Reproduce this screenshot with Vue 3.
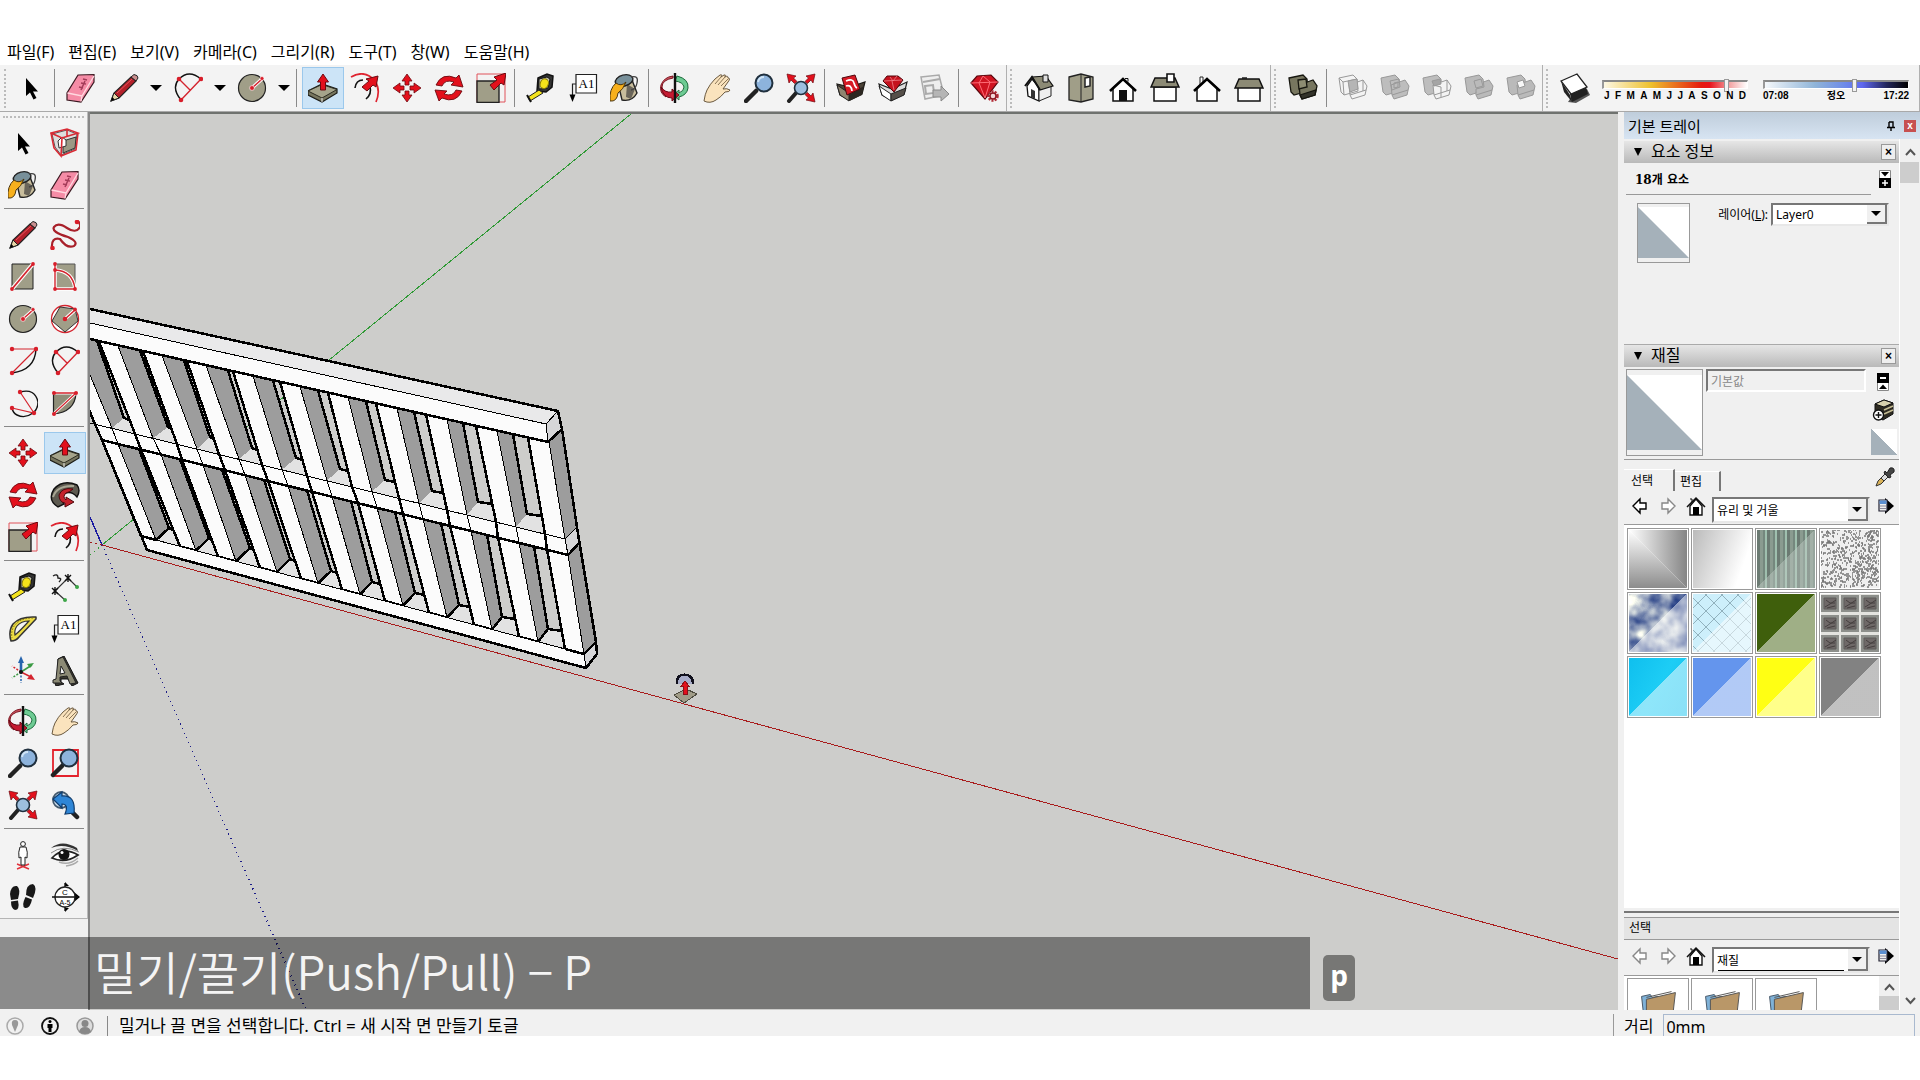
<template>
  <div class="app">
    <svg class="defs" aria-hidden="true">
      <symbol id="i-select" viewBox="0 0 30 30"><path d="M10 5V23L14 19.500L17.500 26.500L20.500 25L17 18.500H22Z" fill="#000" /></symbol>
      <symbol id="i-eraser" viewBox="0 0 30 30">
        <path d="M12 2L28 1.500V9L15 29L1 27V20Z" fill="#f58ca6" stroke="#3a1820" stroke-width="1.200" />
        <path d="M1.500 20L16 23L28 3M16 23L15 28.500" fill="none" stroke="#ffd9e0" stroke-width="1.300" />
        <path d="M15 17L19 8M13 14l4 1M15 10l5 1M17 6l4 1" stroke="#a33b58" stroke-width="1.500" fill="none" />
      </symbol>
      <symbol id="i-pencil" viewBox="0 0 30 30">
        <path d="M2 28L5 20L22 4L27 8L10 25Z" fill="#b4202a" stroke="#222" stroke-width="1.200" />
        <path d="M22 4L25 1.500Q29 2 29 5L27 8Z" fill="#c98f8f" stroke="#222" />
        <path d="M2 28L5 20L10 25Z" fill="#e8d6a8" stroke="#222" /><path d="M2 28l1.500-4 2 2.500z" fill="#000" />
        <path d="M8 20L23 6" stroke="#e5555c" />
      </symbol>
      <symbol id="i-arc" viewBox="0 0 30 30">
        <path d="M8 27Q-2 15 6 6Q16-4 28 6" fill="none" stroke="#111" stroke-width="1.400" />
        <path d="M8 27L28 6M6 6L17 17" stroke="#d4242e" stroke-width="1.400" />
        <g fill="#d81e2a"><circle cx="8" cy="27" r="2.300" /><circle cx="28" cy="6" r="2.300" /><circle cx="6" cy="6" r="2.300" /></g>
      </symbol>
      <symbol id="i-circle" viewBox="0 0 30 30">
        <circle cx="15" cy="15" r="13.500" fill="#a09e88" stroke="#222" stroke-width="1.200" />
        <path d="M15 15L25 6" stroke="#fff" stroke-width="3.500" /><path d="M15 15L25 6" stroke="#d4242e" stroke-width="1.500" />
        <g fill="#d81e2a" stroke="#fff" stroke-width=".6"><circle cx="15" cy="15" r="2.400" /><circle cx="25" cy="5.500" r="2" /></g>
      </symbol>
      <symbol id="i-push" viewBox="0 0 30 30">
        <path d="M0 18L14 11L29 16V20L14 29L0 22Z" fill="#77765f" stroke="#1c1c16" stroke-width="1.200" />
        <path d="M0 18L14 11.500L29 16.500L14 25Z" fill="#a5a48b" stroke="#2c2c22" />
        <path d="M14 25V29" stroke="#eee" />
        <path d="M15 1L20.500 9H17.500V17H12.500V9H9.500Z" fill="#e3101c" stroke="#6c0a10" />
      </symbol>
      <symbol id="i-offset" viewBox="0 0 30 30">
        <path d="M1 4Q15-4 25 8Q31 17 26 29" fill="none" stroke="#df2430" stroke-width="1.700" />
        <path d="M5 15Q6 7 13 7M20 14Q22 21 16 26" fill="none" stroke="#111" stroke-width="1.600" />
        <path d="M12 14L19 8L16 6L28 3L26 14L23 12L17 18Z" fill="#e3101c" stroke="#6c0a10" />
      </symbol>
      <symbol id="i-move" viewBox="0 0 30 30">
        <g fill="#e3101c" stroke="#6c0a10" stroke-width=".8">
          <path d="M15 1L20 8H17V12H13V8H10Z" /><path d="M15 29L20 22H17V18H13V22H10Z" />
          <path d="M1 15L8 10V13H12V17H8V20Z" /><path d="M29 15L22 10V13H18V17H22V20Z" />
        </g>
      </symbol>
      <symbol id="i-rotate" viewBox="0 0 30 30">
        <g fill="#e3101c" stroke="#6c0a10" stroke-width=".9">
          <path d="M2 12Q8-1 22 5L25 2L29 14L17 12L20 9Q11 6 8 13Z" />
          <path d="M28 18Q22 31 8 25L5 28L1 17L13 18L10 21Q19 24 22 17Z" />
        </g>
      </symbol>
      <symbol id="i-scale" viewBox="0 0 30 30">
        <path d="M1 29V1H29V29Z" fill="none" stroke="#e0525a" /><path d="M1 8H23V29.500H1Z" fill="#a09e88" stroke="#222" stroke-width="1.400" />
        <path d="M14 12L21 7L18 4L30 0L28 12L25 10L18 17Z" fill="#e3101c" stroke="#6c0a10" />
      </symbol>
      <symbol id="i-tape" viewBox="0 0 30 30">
        <path d="M12 5L21 1L27 3L26 14L20 19L11 18Z" fill="#333" stroke="#111" stroke-width="1.500" />
        <path d="M13 6L21 4L24 6L22 15L13 16Z" fill="#c8c6b4" stroke="#111" />
        <ellipse cx="18.500" cy="10.500" rx="4" ry="5" fill="#f5e21a" stroke="#8a7d00" transform="rotate(20 18 10)" />
        <path d="M13 17L2 24L4 28L17 20Z" fill="#f3e31d" stroke="#222" /><path d="M1 22l4 7" stroke="#111" stroke-width="2" />
      </symbol>
      <symbol id="i-text" viewBox="0 0 30 30">
        <path d="M8 1.500H28.500V20H8Z" fill="#fff" stroke="#222" stroke-width="1.200" />
        <text x="18.500" y="15" text-anchor="middle" font-family="Liberation Serif, serif" font-size="13">A1</text>
        <path d="M8 11H4.500V23" fill="none" stroke="#222" stroke-width="1.200" /><path d="M1.500 21.500H7.500L4.500 29Z" fill="#000" />
      </symbol>
      <symbol id="i-paint" viewBox="0 0 30 30">
        <path d="M7 6L22 7L27 20Q22 29 12 27Z" fill="#c8bd9c" stroke="#222" stroke-width="1.400" />
        <path d="M17 11l8 5-4 10-5-2z" fill="#6a655a" />
        <ellipse cx="14" cy="7.500" rx="9" ry="5.500" fill="#78909a" stroke="#222" stroke-width="1.400" transform="rotate(-15 14 7)" />
        <path d="M21 4Q29 2 27 10Q26 16 21 17" fill="none" stroke="#444" stroke-width="1.300" />
        <path d="M6 10Q-1 16 0 28Q7 29 8 20Q13 17 16 9Q11 14 6 10Z" fill="#f7b01c" stroke="#4a3510" />
      </symbol>
      <symbol id="i-orbit" viewBox="0 0 30 30">
        <path d="M13 5Q2 7 2 14Q2 19 6 20V24Q-1 20 1 12Q4 4 13 3Z" fill="#cf5560" stroke="#7b1520" />
        <path d="M17 3Q29 6 28 15Q27 22 19 24V27L13 22L19 17V20Q24 18 24 14Q23 9 15 8Z" fill="#6dcb93" stroke="#1c6b3c" />
        <path d="M1 14Q5 20 12 19V16L19 22L12 28V25Q3 25 1 14Z" fill="#c51a31" stroke="#6d0714" />
        <path d="M15 0V30" stroke="#111" stroke-width="2.400" />
      </symbol>
      <symbol id="i-pan" viewBox="0 0 30 30">
        <path d="M2 28Q3 21 5 17Q8 11 13 6L18 2Q21 1 19 4L22 2Q24 1 23 4Q26 2 26 5Q29 5 26 9L21 16Q25 15 28 17Q28 19 23 19Q19 24 14 27Q8 31 2 28Z" fill="#fae3bd" stroke="#6b5a41" />
        <path d="M13 11L19 4M16 12L23 4M19 13L26 6" stroke="#8a7557" fill="none" />
      </symbol>
      <symbol id="i-zoom" viewBox="0 0 30 30">
        <path d="M2 28L12 18" stroke="#222" stroke-width="4.500" stroke-linecap="round" />
        <circle cx="20" cy="10" r="8.500" fill="#8db3dc" stroke="#20303e" stroke-width="2" /><path d="M14 9Q15 4 20 4" stroke="#cfe4f6" stroke-width="2" fill="none" />
      </symbol>
      <symbol id="i-extents" viewBox="0 0 30 30">
        <path d="M3 28L10 20" stroke="#222" stroke-width="4" stroke-linecap="round" />
        <circle cx="15" cy="15" r="6.500" fill="#9dbfdf" stroke="#20303e" stroke-width="1.600" />
        <g fill="#e3101c" stroke="#6c0a10" stroke-width=".7">
          <path d="M1 1L10 3L7.500 5L11 8.500L8.500 10.500L5 7L3 10Z" /><path d="M29 1L20 3L22.500 5L19 8.500L21.500 10.500L25 7L27 10Z" />
          <path d="M29 29L20 27L22.500 25L19 21.500L21.500 19.500L25 23L27 20Z" />
        </g>
      </symbol>
      <symbol id="i-warehouse" viewBox="0 0 30 30">
        <path d="M1 11L14 14L29 9L26 21L14 27L4 22Z" fill="#4b4338" stroke="#1a1713" stroke-width="1.200" />
        <path d="M1 12L13 20V28L4 22Z" fill="#8f8470" stroke="#222" /><path d="M13 22L28 13L26 22L13 28Z" fill="#2c2721" />
        <path d="M6 5L19 2L24 16L11 22Z" fill="#d71925" stroke="#4d070c" />
        <path d="M10 8Q17 5 18 10Q19 14 21 15M10 13Q15 11 16 18" fill="none" stroke="#fff" stroke-width="1.700" />
      </symbol>
      <symbol id="i-extwarehouse" viewBox="0 0 30 30">
        <path d="M1 11L14 16L29 9L26 21L14 27L4 22Z" fill="#ddd" stroke="#222" stroke-width="1.200" />
        <path d="M1 13L13 21V28L4 22Z" fill="#fff" stroke="#222" /><path d="M13 21L28 15L26 22L13 28Z" fill="#554f49" stroke="#222" />
        <path d="M5 8L9 3H20L25 7L16 19Z" fill="#c5121e" stroke="#54060b" /><path d="M6 8L24 7M12 4l3 4 4-5M14 8l2 9" stroke="#f0808a" stroke-width=".8" fill="none" />
      </symbol>
      <symbol id="i-layout" viewBox="0 0 30 30">
        <path d="M1 4L19 2L24 22L5 26Z" fill="#eee" stroke="#aaa" stroke-width="1.500" /><path d="M3 9L20 6M5 13L13 12L14 20L6 21Z" fill="none" stroke="#aaa" stroke-width="2" />
        <path d="M13 17H21V13L29 21L21 28V24H13Z" fill="#b5b5b5" stroke="#888" />
      </symbol>
      <symbol id="i-extmanager" viewBox="0 0 30 30">
        <path d="M1 10L7 3L21 2L28 9L15 26Z" fill="#cf1421" stroke="#5b070d" stroke-width="1.200" />
        <path d="M1 10L28 9M9 10L13 3L20 9M9 10L15 25L20 9" fill="none" stroke="#ff6d77" />
        <circle cx="23" cy="23" r="4.500" fill="#f3d8d8" stroke="#b02a35" stroke-width="2.500" stroke-dasharray="2 1.200" /><circle cx="23" cy="23" r="3" fill="none" stroke="#8d1620" stroke-width="1.400" />
      </symbol>
      <symbol id="i-iso" viewBox="0 0 30 30">
        <path d="M3 13L8 6L15 14V28L4 23Z" fill="#fff" stroke="#111" stroke-width="1.300" /><path d="M15 15L27 12V23L15 28Z" fill="#eee" stroke="#222" />
        <path d="M8 4L22 3L29 13L16 17Z" fill="#8c8a75" stroke="#111" stroke-width="1.200" /><path d="M1 13L8 4L16 17" fill="none" stroke="#111" stroke-width="2" />
        <path d="M19 2H24V9H19Z" fill="#ddd" stroke="#111" /><path d="M7 16L11 18V26L7 24Z" fill="#333" />
      </symbol>
      <symbol id="i-top" viewBox="0 0 30 30">
        <path d="M3 4L15 1L27 4V26L15 29L3 27Z" fill="#a09e88" stroke="#222" stroke-width="1.300" /><path d="M15 1V29" stroke="#222" /><path d="M19 5L24 4V13L19 14Z" fill="#fff" stroke="#222" stroke-width="1.500" />
      </symbol>
      <symbol id="i-front" viewBox="0 0 30 30">
        <path d="M5 15V28H25V15L15 6Z" fill="#fff" stroke="#111" stroke-width="1.500" /><path d="M2 18L15 6L28 18" fill="none" stroke="#000" stroke-width="2.600" /><path d="M11 17H19V28H11Z" fill="#111" /><path d="M17 5.500h3v3" fill="none" stroke="#111" />
      </symbol>
      <symbol id="i-right" viewBox="0 0 30 30">
        <path d="M4 14H26V28H4Z" fill="#fff" stroke="#111" stroke-width="1.500" /><path d="M5 5H25L29 14H1Z" fill="#8c8a75" stroke="#111" stroke-width="1.500" /><path d="M17 1H24V9H17Z" fill="#fff" stroke="#111" stroke-width="1.600" />
      </symbol>
      <symbol id="i-back" viewBox="0 0 30 30">
        <path d="M8 4h3v8H8z" fill="#fff" stroke="#222" /><path d="M5 15V28H25V15L15 6Z" fill="#fff" stroke="#111" stroke-width="1.500" /><path d="M2 18L15 6L28 18" fill="none" stroke="#000" stroke-width="2.600" />
      </symbol>
      <symbol id="i-left" viewBox="0 0 30 30">
        <path d="M8 4h5v3H8z" fill="#555" /><path d="M4 14H26V28H4Z" fill="#fff" stroke="#111" stroke-width="1.500" /><path d="M5 6H25L29 15H1Z" fill="#8c8a75" stroke="#111" stroke-width="1.500" />
      </symbol>
      <symbol id="i-shell" viewBox="0 0 30 30">
        <g fill="#77765f" stroke="#16160f" stroke-width="1.300"><path d="M1 5L15 2L19 6L20 18L6 22L3 19Z" /><path d="M11 12L25 7L29 13L27 22L14 26L12 22Z" /><path d="M12 22L28 17L27 22L14 26Z" fill="#33332a" /><path d="M10 7L18 6L19 14L11 16Z" fill="#8d8c72" /></g>
      </symbol>
      <symbol id="i-intersect" viewBox="0 0 30 30">
        <g fill="none" stroke="#999"><path d="M1 5L15 2L19 6L20 18L6 22L3 19ZM1 5L5 9L19 6M5 9L6 22" /><path d="M11 12L25 7L29 13L27 22L14 26L12 22ZM12 22L28 17M25 7V18" /><path d="M10 8L19 6L20 16L12 19Z" fill="#b5b5b5" /></g>
      </symbol>
      <symbol id="i-union" viewBox="0 0 30 30">
        <g fill="#bdbdbd" stroke="#999"><path d="M1 5L15 2L19 6L20 18L6 22L3 19Z" /><path d="M11 12L25 7L29 13L27 22L14 26L12 22Z" /><path d="M12 22L28 17M10 8L19 6L20 14L12 17ZM14 10L18 9V14L14 15Z" fill="none" /></g>
      </symbol>
      <symbol id="i-subtract" viewBox="0 0 30 30">
        <g stroke="#999"><path d="M1 5L15 2L19 6L20 18L6 22L3 19Z" fill="#bdbdbd" /><path d="M11 12L25 7L29 13L27 22L14 26L12 22Z" fill="#f3f3f3" /><path d="M12 22L28 17M25 7V18M11 12L19 14V24" fill="none" /><path d="M10 8L18 6L19 11L12 13Z" fill="#a5a5a5" /></g>
      </symbol>
      <symbol id="i-trim" viewBox="0 0 30 30">
        <g fill="#bababa" stroke="#999"><path d="M11 12L25 7L29 13L27 22L14 26L12 22Z" /><path d="M12 22L28 17" /><path d="M1 5L15 2L19 6L20 14L12 16V20L6 22L3 19Z" /><path d="M10 8L17 6L19 13L12 15Z" /></g>
      </symbol>
      <symbol id="i-splitsolid" viewBox="0 0 30 30">
        <g fill="#bababa" stroke="#999"><path d="M1 5L15 2L19 6L20 18L6 22L3 19Z" /><path d="M11 12L25 7L29 13L27 22L14 26L12 22Z" /><path d="M12 22L28 17" /><path d="M11 9L17 7L19 13L13 15Z" fill="#f8f8f8" /></g>
      </symbol>
      <symbol id="i-shadow" viewBox="0 0 30 30">
        <path d="M12 23L27 16L30 22L16 30L8 29Z" fill="#555" /><path d="M1 8L10 22L12 29L4 19Z" fill="#222" /><path d="M10 21L26 14L28 21L12 29Z" fill="#222" /><path d="M1 8L17 1L27 14L11 21Z" fill="#fff" stroke="#222" stroke-width="1.300" />
      </symbol>
      <symbol id="i-component" viewBox="0 0 30 30">
        <path d="M2 6L17 2L27 6L25 21L11 27L5 19Z" fill="#ddd" stroke="#555" /><path d="M13 13L26 9L25 20L13 25Z" fill="#9b9985" stroke="#333" /><path d="M8 13L12 9L16 12V18L9 20Z" fill="#fff" stroke="#333" />
        <path d="M1 5L17 1L28 5L12 10ZM1 5L4 20L11 28L12 10M28 5L26 22L11 28M17 1V8" fill="none" stroke="#d92a34" stroke-width="1.600" />
      </symbol>
      <symbol id="i-freehand" viewBox="0 0 30 30">
        <path d="M2 28Q1 17 10 19Q17 29 24 26Q29 22 18 17Q1 12 4 7Q8 2 17 8Q26 14 30 7Q31 3 27 1" fill="none" stroke="#a8202a" stroke-width="2.200" /><g fill="#d81e2a"><circle cx="2.500" cy="28" r="2.300" /><circle cx="27" cy="2" r="2.300" /></g>
      </symbol>
      <symbol id="i-rect" viewBox="0 0 30 30">
        <path d="M4 2H25V27H4Z" fill="#a09e88" stroke="#222" /><path d="M4 27L25 2" stroke="#fff" stroke-width="4" /><path d="M4 27L25 2" stroke="#d4242e" stroke-width="1.800" /><g fill="#d81e2a"><circle cx="4" cy="27" r="1.900" /><circle cx="25" cy="2" r="1.900" /></g>
      </symbol>
      <symbol id="i-rotrect" viewBox="0 0 30 30">
        <path d="M5 2H25V27H5Z" fill="#a09e88" stroke="#555" /><path d="M5 2V27H25M5 8Q23 9 25 27" fill="none" stroke="#fff" stroke-width="3.500" /><path d="M5 2V27H25M5 8Q23 9 25 27" fill="none" stroke="#d4242e" stroke-width="1.400" />
        <g fill="#d81e2a"><circle cx="5" cy="2" r="1.900" /><circle cx="5" cy="8" r="1.900" /><circle cx="5" cy="27" r="1.900" /><circle cx="25" cy="27" r="1.900" /></g>
      </symbol>
      <symbol id="i-polygon" viewBox="0 0 30 30">
        <circle cx="15" cy="15" r="13.500" fill="#fff" stroke="#d4242e" stroke-width="1.300" /><path d="M10 3L25 5L28 17L15 28L2 17Z" fill="#a09e88" stroke="#333" /><path d="M15 15L25 6" stroke="#fff" stroke-width="3.500" /><path d="M15 15L25 6" stroke="#d4242e" stroke-width="1.500" />
        <g fill="#d81e2a"><circle cx="15" cy="15" r="2.300" /><circle cx="25" cy="5.500" r="1.900" /></g>
      </symbol>
      <symbol id="i-arc2" viewBox="0 0 30 30">
        <path d="M28 3Q27 24 4 27" fill="none" stroke="#111" stroke-width="1.400" /><path d="M4 3H28L4 27" fill="none" stroke="#d4242e" stroke-width="1.200" /><g fill="#d81e2a"><circle cx="4" cy="3" r="2.200" /><circle cx="28" cy="3" r="2.200" /><circle cx="4" cy="27" r="2.200" /></g>
      </symbol>
      <symbol id="i-arc3" viewBox="0 0 30 30">
        <path d="M12 4Q27 0 30 14Q30 21 25 25Q17 31 9 27Q5 25 4 20" fill="none" stroke="#111" stroke-width="1.400" /><path d="M12 4L26 25L4 20" fill="none" stroke="#d4242e" stroke-width="1.200" /><g fill="#d81e2a"><circle cx="12" cy="4" r="2.200" /><circle cx="4" cy="20" r="2.200" /><circle cx="26" cy="25" r="2.200" /></g>
      </symbol>
      <symbol id="i-pie" viewBox="0 0 30 30">
        <path d="M3.500 5H26Q25 24 3.500 26Z" fill="#8f8d78" stroke="#222" stroke-width="1.200" /><path d="M3.500 26L26 5H3.500" fill="none" stroke="#fff" stroke-width="3" /><path d="M3.500 26L26 5H3.500" fill="none" stroke="#d4242e" stroke-width="1.300" /><g fill="#d81e2a"><circle cx="4" cy="5" r="2" /><circle cx="26" cy="5" r="2" /><circle cx="4" cy="26" r="2" /></g>
      </symbol>
      <symbol id="i-follow" viewBox="0 0 30 30">
        <path d="M8 27Q-3 20 4 9Q13-1 27 5Q31 10 27 17Q21 10 14 14Q9 18 14 24Z" fill="#5d5a50" stroke="#111" stroke-width="1.400" /><path d="M3 17Q7 5 24 6" stroke="#a8a593" stroke-width="2" fill="none" />
        <path d="M23 9Q12 7 9 15Q9 22 15 23V27L24 22L16 17V20Q12 17 16 13Q20 12 23 9Z" fill="#c4212b" stroke="#4d070c" />
      </symbol>
      <symbol id="i-dimension" viewBox="0 0 30 30">
        <path d="M5 19L18 6L28 16M5 19L15 28" fill="none" stroke="#333" stroke-width="1.200" /><path d="M2 16L8 22M8 16L2 22M5 15V23M15 3L21 9M21 3L15 9M18 2V10" stroke="#111" stroke-width="1.400" />
        <path d="M3 4Q8 1 8 6Q13 6 9 10" fill="none" stroke="#222" stroke-width="1.400" /><g fill="#3da648"><circle cx="27" cy="15" r="2" /><circle cx="15" cy="28" r="2" /></g>
      </symbol>
      <symbol id="i-protractor" viewBox="0 0 30 30">
        <path d="M28 3Q12 2 5 10Q0 17 3 27Q8 27 11 23L28 5Z" fill="#ecdc45" stroke="#333" stroke-width="1.500" stroke-linejoin="round" /><path d="M21 7Q13 7 9 12Q6 16 7 21Q12 17 21 7Z" fill="#f3f3f3" stroke="#333" stroke-width="1.200" /><path d="M25 4Q10 4 5 14Q3 19 4 24" fill="none" stroke="#7d6f10" stroke-dasharray="1.500 1.500" />
      </symbol>
      <symbol id="i-axes" viewBox="0 0 30 30">
        <path d="M13 16V5" stroke="#2563ad" stroke-width="2.600" /><path d="M10 7L13 0L16 7Z" fill="#2563ad" /><path d="M13 16L24 9" stroke="#3a9a43" stroke-width="1.500" /><path d="M26 7l-7 1 3 4z" fill="#3a9a43" /><path d="M13 16L23 21" stroke="#d4242e" stroke-width="1.500" /><path d="M27 24l-8-1 4-5z" fill="#d4242e" />
        <path d="M13 16V27" stroke="#2563ad" stroke-width="1.500" stroke-dasharray="2 1.500" /><path d="M13 16L4 22" stroke="#3a9a43" stroke-width="1.500" stroke-dasharray="2 1.500" /><path d="M13 16L4 10" stroke="#d4242e" stroke-width="1.500" stroke-dasharray="2 1.500" /><circle cx="13" cy="16" r="2" fill="#111" />
      </symbol>
      <!-- extruded A-frame, drawn as a solid -->
      <symbol id="i-text3d" viewBox="0 0 30 30">
        <path d="M8 3L14 0L28 27L22 30L18 23H11V26L14 28L6 30L4 25L8 21Z" fill="#3a3930" stroke="#111" />
        <path d="M8 3L13 1L26 27L20 28L17 20L10 21V25L12 27L3 27V24L6 23Z" fill="#8c8a75" stroke="#222" />
        <path d="M11 10L15 17L10 18Z" fill="#f3f3f3" stroke="#222" />
      </symbol>
      <symbol id="i-zoomwin" viewBox="0 0 30 30">
        <path d="M3 2H28V28H3Z" fill="none" stroke="#e3222c" stroke-width="1.800" /><path d="M3 27L12 18" stroke="#222" stroke-width="4.500" stroke-linecap="round" /><circle cx="19" cy="10" r="8.500" fill="#8db3dc" stroke="#20303e" stroke-width="2" />
      </symbol>
      <symbol id="i-previous" viewBox="0 0 30 30">
        <circle cx="11" cy="10" r="8" fill="#cfe0ee" stroke="#44596c" stroke-width="1.800" /><path d="M18 18L27 27" stroke="#222" stroke-width="4.500" stroke-linecap="round" /><path d="M3 9L12 2V6Q26 5 24 23L15 24Q19 14 12 14V18Z" fill="#2f86d6" stroke="#0f3c6d" stroke-width="1.200" />
      </symbol>
      <symbol id="i-position" viewBox="0 0 30 30">
        <path d="M9 29L21 24M9 24L21 29" stroke="#e0303a" stroke-width="1.400" /><circle cx="15" cy="4" r="2.400" fill="#fff" stroke="#222" /><path d="M12 7H18Q20 12 19 18L17 17V25H13V17L11 18Q10 12 12 7Z" fill="#fff" stroke="#222" />
      </symbol>
      <symbol id="i-look" viewBox="0 0 30 30">
        <path d="M1 8Q12-1 27 8L28 11Q14 3 1 8Z" fill="#333" /><path d="M2 18Q13 6 28 15Q15 24 2 18Z" fill="#fff" stroke="#222" stroke-width="1.800" /><path d="M1 13Q13 4 29 12" fill="none" stroke="#888" /><circle cx="14" cy="14.500" r="5.500" fill="#111" /><circle cx="12" cy="12.500" r="1.500" fill="#fff" />
        <path d="M9 22Q19 26 28 18M16 26Q24 25 28 21" fill="none" stroke="#aaa" stroke-width="1.500" />
      </symbol>
      <symbol id="i-walk" viewBox="0 0 30 30">
        <g fill="#181818"><path d="M2 12Q3 3 9 4Q13 7 10 17L3 18Z" /><path d="M3 19.500L10 18.500Q12 28 7 28Q3 27 3 19.500Z" /><path d="M18 13Q18 2 25 2Q30 5 25 16Z" /><path d="M17.500 15L24 17.500Q22 27 17 26Q13 24 17.500 15Z" /></g>
      </symbol>
      <symbol id="i-section" viewBox="0 0 30 30">
        <path d="M15 0L19 4H15ZM15 30L19 26H15ZM24 10L30 15L24 20Z" fill="#000" /><circle cx="15" cy="15" r="10" fill="#fff" stroke="#222" stroke-width="1.300" /><path d="M2 15H28M15 1V5M15 25V29" stroke="#111" stroke-width="1.400" />
        <text x="15" y="13" text-anchor="middle" font-family="Liberation Sans, sans-serif" font-size="8">C</text><text x="15" y="22.500" text-anchor="middle" font-family="Liberation Sans, sans-serif" font-size="7">A-5</text>
      </symbol>
      <symbol id="i-prev" viewBox="0 0 20 20"><path d="M3 10L10 3V7H16V13H10V17Z" fill="#fff" stroke="currentColor" stroke-width="1.400" /></symbol>
      <symbol id="i-next" viewBox="0 0 20 20"><path d="M17 10L10 3V7H4V13H10V17Z" fill="#fff" stroke="currentColor" stroke-width="1.400" /></symbol>
      <symbol id="i-home" viewBox="0 0 20 20"><path d="M4 3H6V6" fill="none" stroke="#111" /><path d="M4 10V19H16V10L10 3Z" fill="#fff" stroke="#111" stroke-width="1.400" /><path d="M1 11L10 2L19 11" fill="none" stroke="#111" stroke-width="1.500" /><path d="M7 11H13V19H7Z" fill="#000" /></symbol>
      <symbol id="i-details" viewBox="0 0 20 20"><path d="M9 2L18 10L9 18Z" fill="#000" /><path d="M3 4H11V15H3Z" fill="#eee" stroke="#223" stroke-width="1.200" /><path d="M3.500 4.500H10.500V8H3.500Z" fill="#5b8fd0" /><path d="M4 10H10M4 12.500H10" stroke="#889" /></symbol>
      <symbol id="i-dropper" viewBox="0 0 20 20"><path d="M1 19L3 14L11 6L14 9L6 17Z" fill="#d9b258" stroke="#333" /><path d="M6 11L11 6L14 9L9 14Z" fill="#ddd" stroke="#333" /><path d="M10 4L12 6L15 1Q20 0 19 5L15 8L16 10L14 11L9 6Z" fill="#444" stroke="#222" /></symbol>
      <symbol id="i-create" viewBox="0 0 22 22"><path d="M3 5L12 1L21 4V15L11 21L3 17Z" fill="#2e2b22" stroke="#111" /><path d="M3 5L12 1L21 4L12 8Z" fill="#d8d1ae" stroke="#111" /><path d="M12 11L21 7M12 15L21 11" stroke="#c6bd94" stroke-width="1.500" /><circle cx="6.500" cy="16" r="5" fill="#fff" stroke="#111" stroke-width="1.400" /><path d="M3.500 16H9.500M6.500 13V19" stroke="#111" stroke-width="1.400" /></symbol>
    </svg>

    <nav class="menubar">
      <button v-for="m in menus" :key="m" type="button">{{ m }}</button>
    </nav>

    <header class="toolbars">
      <div v-for="(bar, b) in toolbars" :key="b" class="toolbar">
        <template v-for="(t, i) in bar" :key="i">
          <span v-if="t === '|'" class="sep"></span>
          <span v-else-if="splitTools.includes(t)" class="split">
            <button class="tool" type="button" :aria-label="t"><svg class="icon"><use :href="'#i-' + t" /></svg></button>
            <button class="drop" type="button" :aria-label="t + ' options'"></button>
          </span>
          <button v-else class="tool" :class="{ active: t === 'push' }" type="button" :aria-label="t">
            <svg class="icon"><use :href="'#i-' + t" /></svg>
          </button>
        </template>
      </div>
      <div class="toolbar shadows">
        <button class="tool" type="button" aria-label="shadow"><svg class="icon"><use href="#i-shadow" /></svg></button>
        <div class="slider">
          <input v-model="month" class="months" type="range" min="0" max="100" aria-label="month">
          <div class="ticks letters"><span v-for="(c, i) in 'JFMAMJJASOND'" :key="i">{{ c }}</span></div>
        </div>
        <div class="slider">
          <input v-model="time" class="hours" type="range" min="0" max="100" aria-label="time">
          <div class="ticks"><span>07:08</span><span>정오</span><span>17:22</span></div>
        </div>
      </div>
    </header>

    <main class="main">
      <aside class="side">
        <div class="palette">
          <template v-for="(group, g) in palette" :key="g">
            <div class="grid">
              <button v-for="t in group" :key="t" class="tool" :class="{ active: t === 'push' }" type="button" :aria-label="t">
                <svg class="icon"><use :href="'#i-' + t" /></svg>
              </button>
            </div>
            <hr v-if="g < palette.length - 1">
          </template>
        </div>
      </aside>

      <section class="viewport">
        <svg class="scene" viewBox="90 114 1528 896" preserveAspectRatio="xMinYMin slice" shape-rendering="crispEdges">
          <path d="M102 545L631 114" stroke="#2f9a35" />
          <path d="M90 517L102 545" stroke="#1a1aa0" stroke-width="1.500" />
          <path d="M102 545L306 1010" stroke="#1b1b88" stroke-dasharray="1 4" stroke-width="1.500" />
          <path d="M90 542L102 545" stroke="#a01818" stroke-dasharray="2 3" />
          <path d="M90 555L102 545" stroke="#2f9a35" stroke-dasharray="2 3" />
          <path d="M102 545L1618 959" stroke="#a81c1c" />

          <!-- shutter slats, back faces first -->
          <g v-for="(row, r) in slats" :key="r">
            <g v-for="(s, i) in row" :key="i">
              <polygon :points="s.side" fill="#9d9d9d" />
              <polygon :points="s.ledge" fill="#e2e2e2" />
              <polygon :points="s.face" fill="#fbfbfb" />
              <polyline :points="s.thin" class="thin" />
              <polyline :points="s.thick" class="thick" />
              <polyline :points="s.left" class="thick" />
            </g>
          </g>

          <polygon points="549,442 562,429 577,527 565,539" fill="#9d9d9d" />
          <polygon points="568,555 580,542 596,642 584,654" fill="#9d9d9d" />
          <polygon points="90,310 558,411 546,424 90,323" fill="#e9e9ea" />
          <polygon points="90,323 546,424 548,442 90,339" fill="#fbfbfb" />
          <polygon points="546,424 558,411 562,429 548,442" fill="#d6d6d8" />
          <polygon points="95,424 565,539 568,555 102,440" fill="#fbfbfb" />
          <polygon points="565,539 577,527 580,542 568,555" fill="#d6d6d8" />
          <polygon points="141,536 584,654 586,668 147,550" fill="#fbfbfb" />
          <polygon points="584,654 596,642 597,654 586,668" fill="#d6d6d8" />

          <path class="thin" d="M90 323L546 424L558 411M546 424L548 442M549 442L565 539L577 527M565 539L568 555L584 654L586 668M90 423L565 539" />
          <path class="thin" :d="thinCross" />
          <path class="thin" d="M141 536L584 654" />
          <path class="thick" :d="thickCross" />
          <path class="thick" d="M90 309L558 411L562 429L579 540L596 642L597 654L586 668L147 550L102 440L90 413M90 339L548 442L562 429M102 440L568 555L580 542M565 649L584 654L596 642M141 536L156 540" />

          <g transform="translate(673 672)">
            <path d="M1 23L13 17L24 22L11 31Z" fill="#a09c88" stroke="#4c4a3e" />
            <path d="M4 12Q2 4 9 3Q15 2 18 5Q21 8 20 12Z" fill="#a8acc8" />
            <path d="M4 12Q3 4 9 3Q15 2 18 5Q20 8 20 12" fill="none" stroke="#10101c" stroke-width="2.500" />
            <path d="M12 9L16 14H14V22H10V14H8Z" fill="#e3101c" stroke="#8c1018" />
          </g>
        </svg>
      </section>

      <aside class="tray">
        <div class="tray-title">
          <span>기본 트레이</span>
          <button class="pin" type="button" aria-label="pin"><svg viewBox="0 0 10 10"><path d="M3 1H7V6M3 1V6M1 6.500H9M5 7V10" fill="none" stroke="#000" stroke-width="1.400" /></svg></button>
          <button class="close" type="button" aria-label="close">x</button>
        </div>
        <div class="tray-body">
          <div class="panels">
            <div class="panel-head"><span class="tri"></span><h2>요소 정보</h2><button type="button" aria-label="close panel">×</button></div>
            <div class="entity">
              <div class="entity-top"><b>18개 요소</b><button class="toggle" type="button" aria-label="expand"><svg viewBox="0 0 12 18"><path d="M.5.500H11.500V17.500H.5Z" fill="#fff" stroke="#888" /><path d="M2 2H10L6 6.500Z" /><path d="M0 8H12V18H0Z" /><path d="M3 13H9M6 10V16" stroke="#fff" stroke-width="1.500" /></svg></button></div>
              <div class="entity-row">
                <span class="preview small"><svg viewBox="0 0 50 57" preserveAspectRatio="none"><path d="M0 3H50V53H0Z" fill="#fff" /><path d="M0 3L50 53H0Z" fill="#a5b1ba" /></svg></span>
                <label for="layer">레이어(<u>L</u>):</label>
                <span class="combo layer"><select id="layer"><option>Layer0</option></select><i></i></span>
              </div>
            </div>

            <div class="panel-head second"><span class="tri"></span><h2>재질</h2><button type="button" aria-label="close panel">×</button></div>
            <div class="material">
              <span class="preview"><svg viewBox="0 0 75 85" preserveAspectRatio="none"><path d="M0 5H75V80H0Z" fill="#fff" /><path d="M0 5L75 80H0Z" fill="#a5b1ba" /></svg></span>
              <input type="text" value="기본값" aria-label="재질 이름" disabled>
              <div class="material-side">
                <button class="toggle" type="button" aria-label="collapse"><svg viewBox="0 0 12 18"><path d="M.5.500H11.500V17.500H.5Z" fill="#fff" stroke="#888" /><path d="M0 0H12V10H0Z" /><path d="M3 4H9V6H3Z" fill="#fff" /><path d="M2 16H10L6 11.500Z" /></svg></button>
                <button class="create" type="button" aria-label="create"><svg><use href="#i-create" /></svg></button>
                <span class="mini"></span>
              </div>
            </div>
            <div class="tabs">
              <button class="on" type="button">선택</button><button type="button">편집</button>
              <svg class="dropper"><use href="#i-dropper" /></svg>
            </div>
            <div class="nav">
              <button type="button" aria-label="back"><svg><use href="#i-prev" /></svg></button>
              <button type="button" class="dim" aria-label="forward"><svg><use href="#i-next" /></svg></button>
              <button type="button" aria-label="home"><svg><use href="#i-home" /></svg></button>
              <span class="combo"><select aria-label="재질 모음"><option>유리 및 거울</option></select><i></i></span>
              <button type="button" aria-label="details"><svg><use href="#i-details" /></svg></button>
            </div>
            <div class="swatches">
              <button v-for="s in swatches" :key="s" type="button" :aria-label="s">
                <span class="sw" :class="[s, { clear: !opaque.includes(s) }]">
                  <svg v-if="s === 'mirror'" viewBox="0 0 58 58">
                    <defs>
                      <linearGradient id="mirrorA" x2="0" y2="1"><stop stop-color="#fff" /><stop offset="1" stop-color="#8c8c8c" /></linearGradient>
                      <linearGradient id="mirrorB"><stop stop-color="#fff" /><stop offset="1" stop-color="#858585" /></linearGradient>
                    </defs>
                    <path d="M0 0H58V58Z" fill="url(#mirrorB)" /><path d="M0 0L58 58H0Z" fill="url(#mirrorA)" />
                  </svg>
                  <svg v-if="s === 'speckle'" viewBox="0 0 58 58"><path :d="speckle" stroke="#777" stroke-width="1.500" /></svg>
                  <svg v-if="s === 'clouds'" viewBox="0 0 58 58">
                    <filter id="cloud" x="0" y="0" width="1" height="1" color-interpolation-filters="sRGB"><feTurbulence type="fractalNoise" baseFrequency=".045" numOctaves="3" seed="4" /><feColorMatrix values="1.8 0 0 0 -.3  1.6 0 0 0 -.15  .9 0 0 0 .3  0 0 0 0 1" /></filter>
                    <rect width="58" height="58" filter="url(#cloud)" />
                  </svg>
                  <svg v-if="s === 'lattice'" viewBox="0 0 58 58"><path d="M-8 22L22-8M-8 38L38-8M-8 54L54-8M-4 66L66-4M12 66L66 12M28 66L66 28M44 66L66 44M36-8L66 22M20-8L66 38M4-8L66 54M-8-4L62 66M-8 12L46 66M-8 28L30 66M-8 44L14 66" stroke="#8aa9b5" stroke-width=".9" /></svg>
                  <svg v-if="s === 'blocks'" viewBox="0 0 58 58"><g v-for="n in 9" :key="n" :transform="`translate(${((n - 1) % 3) * 20} ${Math.floor((n - 1) / 3) * 20})`"><path d="M0 1H18V18H0Z" fill="#8d8f8b" /><path d="M3 4H15V15H3Z" fill="#6f6968" stroke="#5e5c5a" /><path d="M4 13L9 10L15 6M5 6L9 9L14 9M6 14L14 12" fill="none" stroke="#453f3f" /></g></svg>
                </span>
              </button>
            </div>

            <div class="divider"></div>
            <div class="lower-title">선택</div>
            <div class="nav lower">
              <button type="button" class="dim" aria-label="back"><svg><use href="#i-prev" /></svg></button>
              <button type="button" class="dim" aria-label="forward"><svg><use href="#i-next" /></svg></button>
              <button type="button" aria-label="home"><svg><use href="#i-home" /></svg></button>
              <span class="combo line"><select aria-label="모음"><option>재질</option></select><i></i></span>
              <button type="button" aria-label="details"><svg><use href="#i-details" /></svg></button>
            </div>
            <div class="folders">
              <button v-for="n in 3" :key="n" type="button" aria-label="folder">
                <svg viewBox="0 0 60 60"><path d="M13 17L22 15L24 18L30 17L22 50L16 44Z" fill="#7fb2d8" stroke="#456" /><path d="M18 20L48 13L44 48L18 52Z" fill="#b99768" stroke="#555" /><path d="M18 18L44 12" stroke="#555" /></svg>
              </button>
              <div class="mini-scroll"><svg viewBox="0 0 20 20"><path d="M6 14L10.500 9L15 14" class="chev" /></svg><span></span></div>
            </div>
          </div>
          <div class="scroll">
            <svg viewBox="0 0 20 20"><path d="M6 13L10.500 8L15 13" class="chev" /></svg>
            <span class="thumb"></span>
            <svg class="down" viewBox="0 0 20 20"><path d="M6 8L10.500 13L15 8" class="chev" /></svg>
          </div>
        </div>
      </aside>

      <div class="caption">밀기/끌기(Push/Pull) − P</div>
      <kbd class="key">p</kbd>
    </main>

    <footer class="status">
      <button type="button" aria-label="geo"><svg viewBox="0 0 20 20"><circle cx="10" cy="10" r="8" fill="none" stroke="#aaa" stroke-width="1.500" /><path d="M10 16L7 9Q6 4 10 4Q14 4 13 9Z" fill="#999" /></svg></button>
      <button type="button" aria-label="credits"><svg viewBox="0 0 20 20"><circle cx="10" cy="10" r="8" fill="none" stroke="#111" stroke-width="1.800" /><circle cx="10" cy="5.500" r="1.500" /><path d="M7.500 8H12.500V12H11.500V16H8.500V12H7.500Z" /></svg></button>
      <button type="button" aria-label="account"><svg viewBox="0 0 20 20"><circle cx="10" cy="10" r="8" fill="#ddd" stroke="#999" stroke-width="1.500" /><circle cx="10" cy="7.500" r="3.500" fill="#888" /><path d="M4 16Q5 11 10 11Q15 11 16 16Q10 20 4 16Z" fill="#888" /></svg></button>
      <p>밀거나 끌 면을 선택합니다. Ctrl = 새 시작 면 만들기 토글</p>
      <div class="measure">
        <label for="distance">거리</label>
        <input id="distance" type="text" value="0mm">
      </div>
    </footer>
  </div>
</template>

<script setup>
import { ref } from 'vue'

const month = ref(87)
const time = ref(63)

const menus = ['파일(F)', '편집(E)', '보기(V)', '카메라(C)', '그리기(R)', '도구(T)', '창(W)', '도움말(H)']

const splitTools = ['pencil', 'arc', 'circle']

const toolbars = [
  ['select', '|', 'eraser', 'pencil', 'arc', 'circle', '|', 'push', 'offset', 'move', 'rotate', 'scale', '|',
    'tape', 'text', 'paint', '|', 'orbit', 'pan', 'zoom', 'extents', '|', 'warehouse', 'extwarehouse', 'layout', '|', 'extmanager'],
  ['iso', 'top', 'front', 'right', 'back', 'left'],
  ['shell', '|', 'intersect', 'union', 'subtract', 'trim', 'splitsolid']
]

const palette = [
  ['select', 'component', 'paint', 'eraser'],
  ['pencil', 'freehand', 'rect', 'rotrect', 'circle', 'polygon', 'arc2', 'arc', 'arc3', 'pie'],
  ['move', 'push', 'rotate', 'follow', 'scale', 'offset'],
  ['tape', 'dimension', 'protractor', 'text', 'axes', 'text3d'],
  ['orbit', 'pan', 'zoom', 'zoomwin', 'extents', 'previous'],
  ['position', 'look', 'walk', 'section']
]

const swatches = ['mirror', 'frost', 'ribbed', 'speckle', 'clouds', 'lattice', 'green', 'blocks', 'cyan', 'blue', 'yellow', 'gray']
const opaque = ['mirror', 'frost', 'speckle', 'blocks']

// lines of the rails that the slats run between
const rails = {
  top: (x) => 339.5 + (x - 90) * 0.2238,
  mid: (x) => 424 + (x - 95) * 0.2441,
  midLow: (x) => 440 + (x - 101.7) * 0.2455,
  low: (x) => 536 + (x - 140.7) * 0.2662
}

// x positions of every slat edge where it meets a rail
const rows = [
  {
    from: rails.top,
    to: rails.mid,
    leftTop: [57, 99, 143, 187, 233, 280, 328, 376, 426, 476, 528],
    leftBot: [95, 135, 177, 219, 262, 307, 352, 399, 447, 496, 545],
    thinTop: [74, 118, 162, 206, 253, 300, 348, 397, 447, 497, 549],
    thinBot: [112, 153, 197, 239, 282, 327, 372, 419, 467, 516, 565],
    backTop: [97, 140, 184, 228, 273, 318, 366, 414, 463, 513],
    backBot: [[124, 418], [168, 427], [210, 437], [252, 448], [296, 458], [340, 469], [385, 480], [432, 491], [478, 502], [527, 514]]
  },
  {
    from: rails.midLow,
    to: rails.low,
    leftTop: [102, 141, 182, 225, 268, 312, 358, 403, 450, 498, 547],
    leftBot: [141, 180, 218, 260, 301, 342, 385, 429, 474, 519, 565],
    thinTop: [118, 161, 203, 245, 288, 332, 377, 423, 471, 519, 568],
    thinBot: [156, 196, 236, 277, 318, 360, 403, 447, 492, 538, 584],
    backTop: [139, 180, 222, 264, 307, 351, 395, 441, 487, 534],
    backBot: [[169, 528], [209, 538], [250, 548], [290, 559], [331, 571], [372, 582], [415, 593], [459, 605], [502, 617], [548, 629]]
  }
]

const pts = (...list) => list.map((p) => p.join(',')).join(' ')

const slats = rows.map((row, r) => row.leftTop.map((x, i) => {
  const lt = [x, row.from(x)]
  const lb = [row.leftBot[i], row.to(row.leftBot[i])]
  const tt = [row.thinTop[i], row.from(row.thinTop[i])]
  const tb = [row.thinBot[i], row.to(row.thinBot[i])]
  const slat = { face: pts(lt, tt, tb, lb), thin: pts(tt, tb), left: r ? pts(lt, lb, tb) : pts(lt, lb) }
  const back = row.backBot[i]
  if (back) {
    const bt = [row.backTop[i], row.from(row.backTop[i])]
    const nx = row.leftTop[i + 1]
    const nb = [row.leftBot[i + 1], row.to(row.leftBot[i + 1])]
    const ny = row.from(nx)
    // where the ledge behind the gap meets the next slat
    const y = back[1] + 2
    const edge = [nx + (nb[0] - nx) * (y - ny) / (nb[1] - ny), y]
    slat.side = pts(tt, bt, back, tb)
    slat.ledge = pts(tb, back, edge, nb)
    slat.thick = r ? pts(bt, back, edge, back, tb) : pts(bt, back, edge)
  }
  return slat
}))

const cross = (a, b) => a.map((x, i) => `M${x} ${rails.mid(x)}L${b[i]} ${rails.midLow(b[i])}`).join('')
const thinCross = cross(rows[0].thinBot, rows[1].thinTop)
const thickCross = cross(rows[0].leftBot.slice(1), rows[1].leftTop.slice(1))

let seed = 7
const rand = () => {
  seed = (seed * 16807) % 2147483647
  return seed / 2147483647
}
const speckle = Array.from({ length: 620 }, () => `M${Math.floor(rand() * 58)} ${Math.floor(rand() * 58)}h${rand() > 0.6 ? 2 : 1}`).join('')
</script>

<style>
body {
  margin: 0;
  background: #fff;
}
</style>

<style scoped>
.app {
  min-height: 100vh;
  box-sizing: border-box;
  padding: 38px 0 44px;
  display: flex;
  flex-direction: column;
  background: #fff;
  color: #000;
  font-family: "Noto Sans", "Noto Sans CJK KR", sans-serif;
}

.defs {
  display: none;
}

button {
  border: 0;
  padding: 0;
  margin: 0;
  background: none;
  font: inherit;
  color: inherit;
}

button svg {
  display: block;
}

/* menu */
.menubar {
  display: flex;
  gap: 14px;
  height: 27px;
  padding-left: 7px;
  font-size: 16px;
  line-height: 28px;
}

/* top toolbars */
.toolbars {
  display: flex;
  height: 46px;
  background: #f3f3f3;
  border-bottom: 1px solid #a9a9a9;
}

.toolbar {
  display: flex;
  align-items: center;
  padding-left: 12px;
  position: relative;
  border-right: 1px solid #b0b0b0;
  margin-right: -1px;
}

.toolbar:first-child {
  padding-left: 10px;
}

.toolbar::before {
  content: '';
  position: absolute;
  left: 4px;
  top: 4px;
  bottom: 3px;
  border-left: 2px dotted #bbb;
}

.tool {
  width: 42px;
  height: 42px;
  box-sizing: border-box;
  display: flex;
  align-items: center;
  justify-content: center;
  border: 1px solid transparent;
}

.tool.active {
  background: #cce4f7;
  border-color: #9bc8ec;
}

.icon {
  width: 30px;
  height: 30px;
}

.sep {
  width: 1px;
  height: 38px;
  margin: 0 5px 0 2px;
  background: #8a8a8a;
}

.split {
  display: flex;
}

.split .tool {
  width: 44px;
}

.drop {
  width: 20px;
  display: flex;
  align-items: center;
  justify-content: center;
}

.drop::after {
  content: '';
  border: 6px solid transparent;
  border-top-color: #000;
  border-bottom: 0;
}

.shadows {
  flex: 1;
  align-items: flex-start;
  padding-top: 2px;
  margin-right: 0;
}

.slider {
  width: 146px;
  margin: 13px 0 0 6px;
}

.slider + .slider {
  margin-left: 15px;
}

.slider input {
  appearance: none;
  display: block;
  width: 100%;
  height: 9px;
  margin: 0;
  border: 1px solid #fff;
  border-top: 2px solid #888;
  border-left: 2px solid #999;
  box-sizing: border-box;
}

.slider input::-webkit-slider-thumb {
  appearance: none;
  width: 5px;
  height: 13px;
  background: #f3f3f3;
  border: 1px solid #999;
  box-sizing: border-box;
}

.months {
  background: linear-gradient(90deg, #fdf8e4, #eec02c 33%, #e51b10 68%, #e8141c 74%, #f3a5a5 88%, #fff);
}

.hours {
  background: linear-gradient(90deg, #f5f8fb, #8fb4d8 35%, #6f8ce8 55%, #5f68f0 68%, #23265c 85%, #000);
}

.ticks {
  display: flex;
  justify-content: space-between;
  margin-top: 2px;
  font: bold 10px/10px "Liberation Sans", "Noto Sans CJK KR", sans-serif;
}

.letters {
  padding: 0 2px;
}

/* main area */
.main {
  flex: 1;
  display: grid;
  grid-template-columns: 90px minmax(0, 1fr) 302px;
  position: relative;
}

.side {
  background: #f0f0f0;
  border-right: 2px solid #868686;
}

.palette {
  padding: 10px 1px 0 2px;
  border-bottom: 1px solid #b5b5b5;
  border-right: 1px solid #bbb;
  background: #f3f3f3;
  position: relative;
}

.palette::before {
  content: '';
  position: absolute;
  top: 4px;
  left: 3px;
  right: 3px;
  border-top: 2px dotted #bbb;
}

.grid {
  display: grid;
  grid-template-columns: 42px 42px;
}

.palette hr {
  height: 1px;
  border: 0;
  margin: 2px 2px 5px;
  background: #888;
}

.viewport {
  position: relative;
  background: #cdcdcb;
  border-top: 2px solid #6f726f;
}

.scene {
  position: absolute;
  inset: 0;
  width: 100%;
  height: 100%;
}

.thin {
  fill: none;
  stroke: #000;
  stroke-width: 1;
}

.thick {
  fill: none;
  stroke: #000;
  stroke-width: 2.5;
}

/* tray */
.tray {
  display: flex;
  flex-direction: column;
  padding-left: 6px;
  background: #f0f0f0;
  font-size: 12px;
}

.tray-title {
  display: flex;
  align-items: center;
  height: 27px;
  padding: 0 4px;
  font-size: 15px;
  line-height: 24px;
  background: linear-gradient(#bfcddb, #d7e4f2);
}

.tray-title span {
  flex: 1;
}

.pin svg {
  width: 10px;
  height: 10px;
}

.close {
  width: 12px;
  height: 12px;
  margin-left: 8px;
  background: #c75050;
  color: #fff;
  font: bold 10px/10px "Liberation Sans", sans-serif;
}

.tray-body {
  flex: 1;
  display: flex;
}

.panels {
  flex: 1;
  min-width: 0;
  display: flex;
  flex-direction: column;
  padding-top: 2px;
  border-right: 1px solid #fff;
}

.panel-head {
  display: flex;
  align-items: center;
  height: 22px;
  box-sizing: border-box;
  padding: 0 3px 0 10px;
  background: linear-gradient(#e6e6e6, #b9b9b9);
}

.panel-head.second {
  height: 23px;
  border-top: 1px solid #aaa;
}

.panel-head h2 {
  flex: 1;
  margin: 0 0 2px 9px;
  font-size: 16px;
  font-weight: 400;
  line-height: 20px;
}

.tri {
  border: 4px solid transparent;
  border-top: 8px solid #000;
  border-bottom: 0;
}

.panel-head button {
  width: 15px;
  height: 16px;
  background: #eee;
  border: 1px solid #999;
  font: bold 12px/13px "Liberation Sans", sans-serif;
}

.entity {
  height: 181px;
}

.entity-top {
  display: flex;
  align-items: center;
  height: 31px;
  margin: 0 28px 0 2px;
  padding-left: 9px;
  border-bottom: 1px solid #999;
}

.entity-top b {
  flex: 1;
  font-family: "DejaVu Serif", "Noto Sans CJK KR", serif;
  font-size: 12px;
}

.toggle {
  width: 12px;
}

.entity-top .toggle {
  margin-right: -20px;
}

.toggle svg {
  width: 12px;
  height: 18px;
}

.entity-row {
  display: flex;
  align-items: flex-start;
  padding: 8px 10px 0 13px;
}

.preview {
  flex: none;
  width: 77px;
  height: 87px;
  box-sizing: border-box;
  border: 1px solid #999;
}

.preview svg {
  display: block;
  width: 100%;
  height: 100%;
}

.preview.small {
  width: 53px;
  height: 60px;
}

.entity-row label {
  flex: 1;
  line-height: 24px;
  text-align: right;
  padding-right: 3px;
}

.combo {
  position: relative;
  flex: 1;
  height: 26px;
  box-sizing: border-box;
  display: flex;
  background: #fff;
  border: 2px solid #6d6d6d;
  border-color: #777 #e8e8e8 #e8e8e8 #777;
}

.combo.layer {
  flex: none;
  width: 118px;
  height: 23px;
}

.combo select {
  appearance: none;
  flex: 1;
  min-width: 0;
  border: 0;
  padding: 0 3px;
  background: none;
  color: #000;
  font: inherit;
}

.combo i {
  position: absolute;
  right: 0;
  top: 0;
  bottom: 0;
  width: 18px;
  display: flex;
  align-items: center;
  justify-content: center;
  background: #f0f0f0;
  border-right: 2px solid #777;
  border-bottom: 2px solid #777;
  pointer-events: none;
}

.combo i::after {
  content: '';
  border: 5px solid transparent;
  border-top-color: #000;
  border-bottom: 0;
}

.combo.line::after {
  content: '';
  position: absolute;
  left: 4px;
  right: 24px;
  bottom: 0;
  height: 1px;
  background: #000;
}

.material {
  display: flex;
  align-items: flex-start;
  height: 92px;
  box-sizing: border-box;
  padding: 2px 2px 0;
}

.material > input {
  flex: 1;
  min-width: 0;
  height: 23px;
  box-sizing: border-box;
  margin: 0 3px;
  padding: 0 3px;
  border: 2px solid #fff;
  border-top-color: #777;
  border-left-color: #777;
  background: #f0f0f0;
  color: #888;
  font: inherit;
}

.material-side {
  width: 28px;
  display: flex;
  flex-direction: column;
  align-items: center;
  gap: 8px;
  padding-top: 4px;
}

.create svg {
  width: 22px;
  height: 22px;
}

.mini {
  width: 26px;
  height: 26px;
  align-self: flex-end;
  background: linear-gradient(45deg, #a5b1ba 50%, #fff 50%);
}

.tabs {
  display: flex;
  align-items: flex-end;
  height: 31px;
  border-top: 1px solid #999;
}

.tabs button {
  width: 46px;
  height: 20px;
  padding-left: 5px;
  text-align: left;
  line-height: 16px;
  border-right: 2px solid #777;
  border-top: 1px solid #fff;
}

.tabs .on {
  width: 51px;
  height: 22px;
  padding-left: 7px;
}

.tabs .dropper {
  width: 20px;
  height: 20px;
  margin: 0 4px 4px auto;
}

.nav {
  display: flex;
  align-items: flex-start;
  height: 34px;
  box-sizing: border-box;
  padding: 5px 3px 0 6px;
  border-bottom: 1px solid #999;
}

.nav button {
  width: 20px;
}

.nav button + button {
  margin-left: 8px;
}

.nav .combo {
  margin: 1px 6px 0;
}

.nav svg {
  width: 20px;
  height: 20px;
}

.nav .dim {
  color: #888;
}

.swatches {
  flex: 1;
  display: grid;
  grid-template-columns: repeat(4, 62px);
  grid-auto-rows: 62px;
  gap: 2px;
  padding: 3px 3px 2px;
  background: #fff;
}

.swatches button,
.folders button {
  border: 1px solid #999;
  padding: 1px;
}

.sw {
  display: block;
  position: relative;
  width: 58px;
  height: 58px;
  overflow: hidden;
}

.sw svg {
  width: 58px;
  height: 58px;
}

/* lower right half shows the material's transparency */
.sw.clear::after {
  content: '';
  position: absolute;
  inset: 0;
  background: linear-gradient(135deg, transparent 50%, rgba(255, 255, 255, .5) 50%);
}

.frost {
  background: linear-gradient(110deg, #bbb, #fff 80%);
}

.ribbed {
  background: repeating-linear-gradient(90deg, #6b7a72 0 3px, #8a9b90 3px 6px, #75887e 6px 8px, #9fbfae 8px 10px);
}

.ribbed.clear::after {
  background: linear-gradient(135deg, transparent 50%, rgba(200, 210, 204, .4) 50%);
}

.speckle {
  background: #efefef;
}

.lattice {
  background: #cdeffb;
}

.green {
  background: #3f5f0c;
}

.blocks {
  background: #e4e4e0;
}

.cyan {
  background: linear-gradient(120deg, #0fbfee, #1dcdf5, #14c1ee);
}

.blue {
  background: #6495ed;
}

.yellow {
  background: #ffff14;
}

.gray {
  background: #828282;
}

.divider {
  height: 9px;
  box-sizing: border-box;
  border-top: 3px solid #f0f0f0;
  background: linear-gradient(#777 2px, #f0f0f0 2px);
}

.lower-title {
  height: 21px;
  padding-left: 5px;
  line-height: 20px;
  background: #e4e4e4;
  border-top: 1px solid #999;
  border-bottom: 1px solid #999;
}

.nav.lower {
  height: 36px;
  padding-top: 6px;
}

.folders {
  display: flex;
  gap: 2px;
  height: 34px;
  padding: 2px 0 0 3px;
  box-sizing: border-box;
  overflow: hidden;
  background: #fff;
}

.folders button {
  width: 62px;
  height: 62px;
  box-sizing: border-box;
}

.mini-scroll {
  width: 20px;
  margin: -2px 0 0 auto;
  background: #f0f0f0;
}

.mini-scroll span {
  display: block;
  height: 20px;
  background: #cdcdcd;
}

.mini-scroll svg,
.scroll svg {
  display: block;
  width: 20px;
  height: 20px;
}

.chev {
  fill: none;
  stroke: #555;
  stroke-width: 2;
}

.scroll {
  flex: none;
  width: 20px;
  display: flex;
  flex-direction: column;
  padding-top: 3px;
}

.thumb {
  height: 21px;
  margin-right: 1px;
  background: #cdcdcd;
}

.scroll .down {
  margin-top: auto;
}

/* overlays */
.caption {
  position: absolute;
  left: 0;
  right: 610px;
  bottom: 1px;
  height: 72px;
  box-sizing: border-box;
  padding-left: 94px;
  background: rgba(0, 0, 0, .42);
  color: #f4f4f4;
  font-size: 46px;
  font-family: "Noto Sans CJK KR", sans-serif;
  font-weight: 350;
  line-height: 66px;
  white-space: nowrap;
}

.key {
  position: absolute;
  right: 565px;
  bottom: 9px;
  width: 32px;
  height: 46px;
  border-radius: 5px;
  background: #777775;
  color: #fff;
  font: bold 28px/40px "Open Sans", sans-serif;
  text-align: center;
}

/* status bar */
.status {
  display: flex;
  align-items: center;
  height: 26px;
  box-sizing: border-box;
  overflow: hidden;
  padding: 5px 0 0 5px;
  background: #f1f1f1;
  font-size: 17px;
}

.status button {
  width: 20px;
  margin-right: 15px;
}

.status svg {
  width: 20px;
  height: 20px;
}

.status p {
  flex: 1;
  margin: 0 0 0 -3px;
  padding-left: 11px;
  border-left: 1px solid #888;
  line-height: 20px;
}

.measure {
  display: flex;
  align-items: center;
  width: 307px;
  box-sizing: border-box;
  padding: 0 5px 0 10px;
  border-left: 1px solid #999;
  font-size: 16px;
  line-height: 20px;
}

.measure input {
  flex: 1;
  min-width: 0;
  height: 24px;
  box-sizing: border-box;
  margin: 0 0 0 10px;
  padding: 2px 2px 0;
  border: 1px solid #a9b9cf;
  border-bottom: 0;
  background: #f1f1f1;
  color: #000;
  font: inherit;
}
</style>
